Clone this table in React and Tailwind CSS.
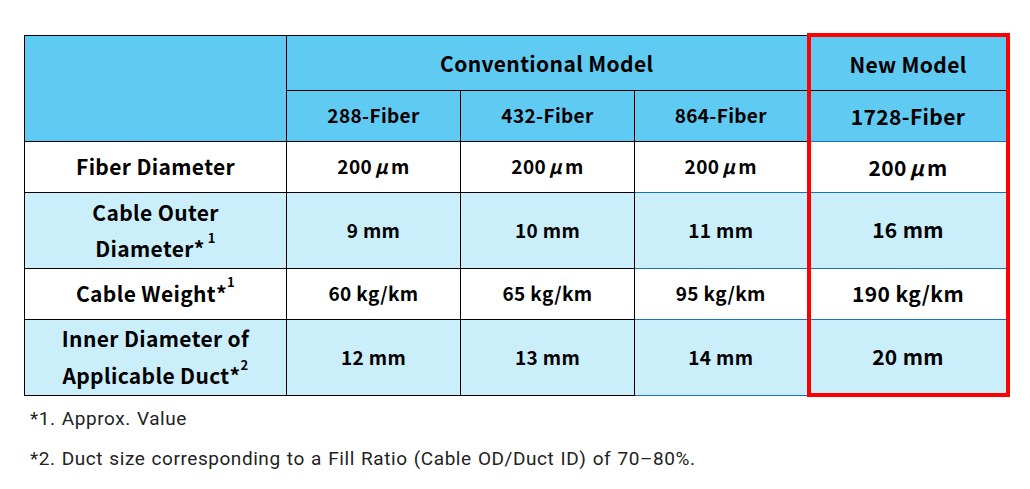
import React from "react";

const F = { fontFamily: '"Noto Sans CJK JP", "Noto Sans", sans-serif', letterSpacing: "0.35px" };

function Mu({ v }) {
  return (
    <span>
      {v}
      <span className="mx-[3px] italic" style={{ fontFamily: '"Noto Sans CJK JP", sans-serif' }}>μ</span>m
    </span>
  );
}

export default function App() {
  const bk = "border border-black";
  const nm = "border-l-4 border-r-4 border-l-[#ff0000] border-r-[#ff0000]";
  return (
    <div className="w-[1030px] h-[489px] bg-white pt-[33px] pl-[24px] text-black">
      <table
        className="border-collapse text-center font-bold"
        style={{ ...F, tableLayout: "fixed", width: "983px" }}
      >
        <colgroup>
          <col style={{ width: "262px" }} />
          <col style={{ width: "174px" }} />
          <col style={{ width: "174px" }} />
          <col style={{ width: "174px" }} />
          <col style={{ width: "199px" }} />
        </colgroup>
        <tbody>
          <tr className="h-[55px] bg-[#5fcaf2]">
            <td rowSpan={2} className={bk}></td>
            <td colSpan={3} className={`${bk} text-[21px] pt-[2px]`}>Conventional Model</td>
            <td className={`${bk} ${nm} border-t-4 border-t-[#ff0000] text-[21px] pt-[2px]`}>New Model</td>
          </tr>
          <tr className="h-[51px] bg-[#5fcaf2]">
            <td className={`${bk} text-[19px]`}>288-Fiber</td>
            <td className={`${bk} text-[19px]`}>432-Fiber</td>
            <td className={`${bk} text-[19px]`}>864-Fiber</td>
            <td className={`${bk} ${nm} border-b-[#1f6fbf] text-[21px] pt-[2px]`}>1728-Fiber</td>
          </tr>
          <tr className="h-[51px] bg-white">
            <td className={`${bk} text-[21px]`}>Fiber Diameter</td>
            <td className={`${bk} text-[19px]`}><Mu v="200" /></td>
            <td className={`${bk} text-[19px]`}><Mu v="200" /></td>
            <td className={`${bk} border-b-[#1f6fbf] text-[19px]`}><Mu v="200" /></td>
            <td className={`${bk} ${nm} border-b-[#1f6fbf] text-[21px] pt-[3px]`}><Mu v="200" /></td>
          </tr>
          <tr className="h-[76px] bg-[#cbeefb]">
            <td className={`${bk} text-[21px] leading-[36px]`}>
              Cable Outer<br />Diameter*<sup className="text-[13px] ml-[3px] align-super">1</sup>
            </td>
            <td className={`${bk} text-[19px]`}>9 mm</td>
            <td className={`${bk} text-[19px]`}>10 mm</td>
            <td className={`${bk} border-b-[#1f6fbf] text-[19px]`}>11 mm</td>
            <td className={`${bk} ${nm} border-b-[#1f6fbf] text-[21px]`}>16 mm</td>
          </tr>
          <tr className="h-[51px] bg-white">
            <td className={`${bk} text-[21px]`}>
              Cable Weight*<sup className="text-[13px] align-super">1</sup>
            </td>
            <td className={`${bk} text-[19px]`}>60 kg/km</td>
            <td className={`${bk} text-[19px]`}>65 kg/km</td>
            <td className={`${bk} border-b-[#1f6fbf] text-[19px]`}>95 kg/km</td>
            <td className={`${bk} ${nm} border-b-[#1f6fbf] text-[21px]`}>190 kg/km</td>
          </tr>
          <tr className="h-[76px] bg-[#cbeefb]">
            <td className={`${bk} text-[21px] leading-[37px]`}>
              Inner Diameter of<br />Applicable Duct*<sup className="text-[13px] align-super">2</sup>
            </td>
            <td className={`${bk} text-[19px]`}>12 mm</td>
            <td className={`${bk} text-[19px]`}>13 mm</td>
            <td className={`${bk} border-b-[#1f6fbf] text-[19px]`}>14 mm</td>
            <td className={`${bk} ${nm} border-b-4 border-b-[#ff0000] text-[21px]`}>20 mm</td>
          </tr>
        </tbody>
      </table>
      <div
        className="mt-[10px] ml-[6px] text-[19px] text-[#222]"
        style={{ fontFamily: 'Roboto, sans-serif', letterSpacing: "0.55px", wordSpacing: "1px" }}
      >
        <div className="leading-[24px]">*1. Approx. Value</div>
        <div className="leading-[24px] mt-[16px]">*2. Duct size corresponding to a Fill Ratio (Cable OD/Duct ID) of 70–80%.</div>
      </div>
    </div>
  );
}
